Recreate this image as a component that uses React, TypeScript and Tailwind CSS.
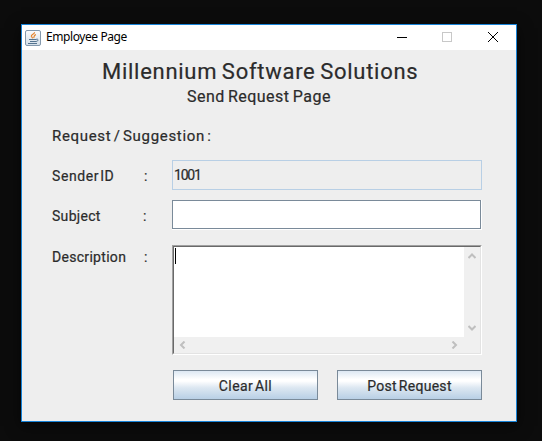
import type { ReactNode } from "react";

function JavaIcon() {
  return (
    <svg width="16" height="16" viewBox="0 0 16 16" fill="none">
      <defs>
        <linearGradient id="tile" x1="0" y1="0" x2="0" y2="1">
          <stop offset="0" stopColor="#fbfcfd" />
          <stop offset="1" stopColor="#d3dee8" />
        </linearGradient>
      </defs>
      <rect x="0.5" y="0.5" width="15" height="15" rx="1.5" fill="url(#tile)" stroke="#8499ad" />
      <path d="M9.6 2.2C9.6 4 6 4.4 6.3 6.2C6.5 7 7.4 7.4 7.6 8.4M11 4.6C8.4 5 9.8 6.4 8.6 8" stroke="#e5842c" strokeWidth="1.2" />
      <path d="M4 9.5h7.5M5 11.5h6M3 13.5h9" stroke="#54738f" />
      <path d="M11.3 9.2c2.5-.4 2.4 1.8-.2 2.3" stroke="#54738f" />
    </svg>
  );
}

function TitleBar() {
  return (
    <header className="flex h-[25px] items-center bg-white pl-[3px] pr-[17px]">
      <JavaIcon />
      <span className="mb-[2px] ml-[5px] grow whitespace-nowrap font-['Noto_Sans',sans-serif] text-[12px] leading-[16px] tracking-[-0.42px] text-black">
        Employee Page
      </span>
      <svg width="102" height="12" viewBox="0 0 102 12" fill="none" shapeRendering="crispEdges" className="-mt-px">
        <path d="M0 6.5h10" stroke="#000" />
        <rect x="45.5" y="1.5" width="9" height="9" stroke="#c8c8c8" />
        <path d="M91 1l10 10M101 1L91 11" stroke="#000" shapeRendering="auto" />
      </svg>
    </header>
  );
}

function Row({ label, labelClass, colonClass, className, children }: {
  label: string;
  labelClass: string;
  colonClass: string;
  className: string;
  children: ReactNode;
}) {
  return (
    <div className={`flex ${className}`}>
      <div className="flex h-[30px] w-[150px] items-center pl-[30px] pt-[2px] text-[14px] leading-[16px]">
        <span className={`w-[92px] whitespace-nowrap ${labelClass}`}>{label}</span>
        <span className={colonClass}>:</span>
      </div>
      {children}
    </div>
  );
}

function Chevron({ d, className }: { d: string; className: string }) {
  return (
    <svg width="8" height="8" viewBox="0 0 8 8" fill="none" className={className}>
      <path d={d} stroke="#bfbfbf" strokeWidth="2" />
    </svg>
  );
}

function TextArea() {
  return (
    <div className="h-[110px] w-[310px] border border-t-[#a0a0a0] border-r-white border-b-white border-l-[#a0a0a0]">
      <div className="flex h-full flex-col border border-t-[#696969] border-r-[#e3e3e3] border-b-[#e3e3e3] border-l-[#696969] bg-[#f0f0f0]">
        <div className="flex h-[90px]">
          <div className="w-[290px] bg-white pl-px pt-px">
            <div className="h-4 w-px bg-black" />
          </div>
          <div className="flex w-4 flex-col items-center justify-between pt-[5px] pb-[5px]">
            <Chevron d="M.5 6L4 2.5L7.5 6" className="-ml-px" />
            <Chevron d="M.5 2L4 5.5L7.5 2" className="-ml-px" />
          </div>
        </div>
        <div className="flex h-4 w-[290px] items-center justify-between pl-[4px] pr-[5px]">
          <Chevron d="M6.5.5L3 4L6.5 7.5" className="-mt-px" />
          <Chevron d="M1.5.5L5 4L1.5 7.5" className="-mt-px" />
        </div>
      </div>
    </div>
  );
}

function Button({ children, textClass }: { children: ReactNode; textClass: string }) {
  return (
    <button className="flex h-[30px] w-[145px] items-center justify-center border border-[#7a8a99] bg-[linear-gradient(to_bottom,#dde8f3_0%,#ffffff_30%,#ffffff_36%,#dce7f1_60%,#b8cfe5_100%)] pt-[2px] text-[14px] leading-[16px]">
      <span className={`whitespace-nowrap ${textClass}`}>{children}</span>
    </button>
  );
}

export default function App() {
  return (
    <div className="h-[441px] w-[542px] overflow-hidden bg-[#0c0c0c] pl-[21px] pt-[24px]">
      <div className="h-[398px] w-[496px] border border-[#1883d7] bg-[#eeeeee] shadow-[0_4px_14px_#00000099]">
        <TitleBar />
        <main className="font-[Roboto,sans-serif] font-normal text-[#2b2b2b] [-webkit-text-stroke:0.2px_#2b2b2b]">
          <h1 className="h-[34px] whitespace-nowrap pl-[80px] pt-[9px] text-[22px] font-normal leading-[26px] tracking-[0.72px] [word-spacing:-1.5px]">
            Millennium Software Solutions
          </h1>
          <h2 className="h-[41px] whitespace-nowrap pl-[165px] pt-[3px] text-[16px] font-normal leading-[20px] tracking-[0.45px] [word-spacing:-1px]">
            Send Request Page
          </h2>
          <h3 className="h-[35px] whitespace-nowrap pl-[30px] text-[15px] font-normal leading-[22px] tracking-[0.68px] [word-spacing:-2px]">
            Request / Suggestion :
          </h3>
          <Row label="Sender ID" labelClass="tracking-[0.6px] [word-spacing:-3px]" colonClass="" className="h-[30px]">
            <div className="flex w-[310px] items-center border border-[#b8cfe5] pl-px text-[14px] leading-[16px] tracking-[-1.2px]">
              1001
            </div>
          </Row>
          <Row label="Subject" labelClass="tracking-[0.3px]" colonClass="-ml-px" className="mt-[10px] h-[30px]">
            <div className="w-[310px] border-r border-b border-white">
              <div className="h-full border border-[#7a8a99] bg-white" />
            </div>
          </Row>
          <Row label="Description" labelClass="-mt-[8px] tracking-[0.3px]" colonClass="-mt-[8px]" className="mt-[15px] h-[110px]">
            <TextArea />
          </Row>
          <div className="mt-[15px] flex gap-[19px] pl-[151px]">
            <Button textClass="tracking-[0.4px] [word-spacing:-2px]">Clear All</Button>
            <Button textClass="tracking-[0.3px] [word-spacing:-2px]">Post Request</Button>
          </div>
        </main>
      </div>
    </div>
  );
}
